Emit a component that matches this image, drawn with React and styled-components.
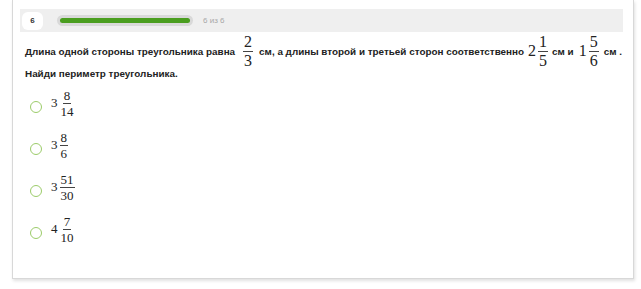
import React from 'react'
import styled, { createGlobalStyle } from 'styled-components'

const Global = createGlobalStyle`
body {
  margin: 0;
  background: #fff;
  font-family: "Liberation Sans", Arial, sans-serif;
}
`

const Page = styled.div`
width: 641px;
height: 289px;
padding: 0 7px 0 12px;
box-sizing: border-box;
overflow: hidden;
`

const Card = styled.div`
width: 622px;
height: 279px;
box-sizing: border-box;
border: 1px solid #d8d8d8;
border-top: none;
background: #fff;
box-shadow: 1px 2px 3px rgba(0, 0, 0, 0.12);
padding: 9px 10px 0 7px;
`

const Header = styled.div`
height: 23px;
background: #efefef;
display: flex;
align-items: center;
padding-left: 2px;
`

const Badge = styled.div`
width: 21px;
height: 18px;
border-radius: 6px;
background: #fff;
display: flex;
align-items: center;
justify-content: center;
font-size: 8px;
font-weight: bold;
color: #333;
`

const Track = styled.div`
margin-left: 14px;
width: 136px;
height: 11px;
border-radius: 6px;
background: #d9d9d9;
padding: 3px;
box-sizing: border-box;
`

const Fill = styled.div`
height: 100%;
border-radius: 3px;
background: #4a9e1f;
`

const Counter = styled.span`
margin-left: 10px;
font-size: 8px;
color: #a8a8a8;
`

const Question = styled.div`
padding: 2px 0 0 5px;
font-size: 9.9px;
font-weight: bold;
color: #222;
`

const Line = styled.div`
height: ${p => p.h}px;
display: flex;
align-items: center;
white-space: pre;
`

const Mixed = styled.span`
display: inline-flex;
align-items: center;
font-family: "Liberation Serif", "Times New Roman", serif;
font-weight: normal;
color: #222;
font-size: ${p => p.size}px;
margin: 0 ${p => p.gap}px;
`

const Frac = styled.span`
display: inline-flex;
flex-direction: column;
align-items: center;
line-height: 1;
margin-left: 2px;
`

const Num = styled.span`
padding: 0 1px 1px;
border-bottom: 1px solid #444;
`

const Den = styled.span`
padding: 1px 1px 0;
`

const Options = styled.div`
padding: 4px 0 0 10px;
display: flex;
flex-direction: column;
`

const Option = styled.label`
height: 42px;
display: flex;
align-items: center;
gap: 9px;
`

const Radio = styled.span`
width: 10px;
height: 10px;
border-radius: 50%;
border: 1.5px solid #9ccc6a;
background: #fff;
flex: none;
margin-top: 8px;
`

function Fraction({ whole, n, d, size = 16, gap = 0 }) {
  return (
    <Mixed size={size} gap={gap}>
      {whole && <span>{whole}</span>}
      <Frac>
        <Num>{n}</Num>
        <Den>{d}</Den>
      </Frac>
    </Mixed>
  )
}

const answers = [
  ['3', '8', '14'],
  ['3', '8', '6'],
  ['3', '51', '30'],
  ['4', '7', '10'],
]

export default function App() {
  return (
    <Page>
      <Global />
      <Card>
        <Header>
          <Badge>6</Badge>
          <Track><Fill /></Track>
          <Counter>6 из 6</Counter>
        </Header>
        <Question>
          <Line h={34}>
            Длина одной стороны треугольника равна
            <Fraction n="2" d="3" gap={6} />
            см, а длины второй и третьей сторон соответственно
            <Fraction whole="2" n="1" d="5" gap={4} />
            см и
            <Fraction whole="1" n="5" d="6" gap={5} />
            см .
          </Line>
          <Line h={10}>Найди периметр треугольника.</Line>
        </Question>
        <Options>
          {answers.map((a, i) => (
            <Option key={i}>
              <Radio />
              <Fraction whole={a[0]} n={a[1]} d={a[2]} size={13} />
            </Option>
          ))}
        </Options>
      </Card>
    </Page>
  )
}
